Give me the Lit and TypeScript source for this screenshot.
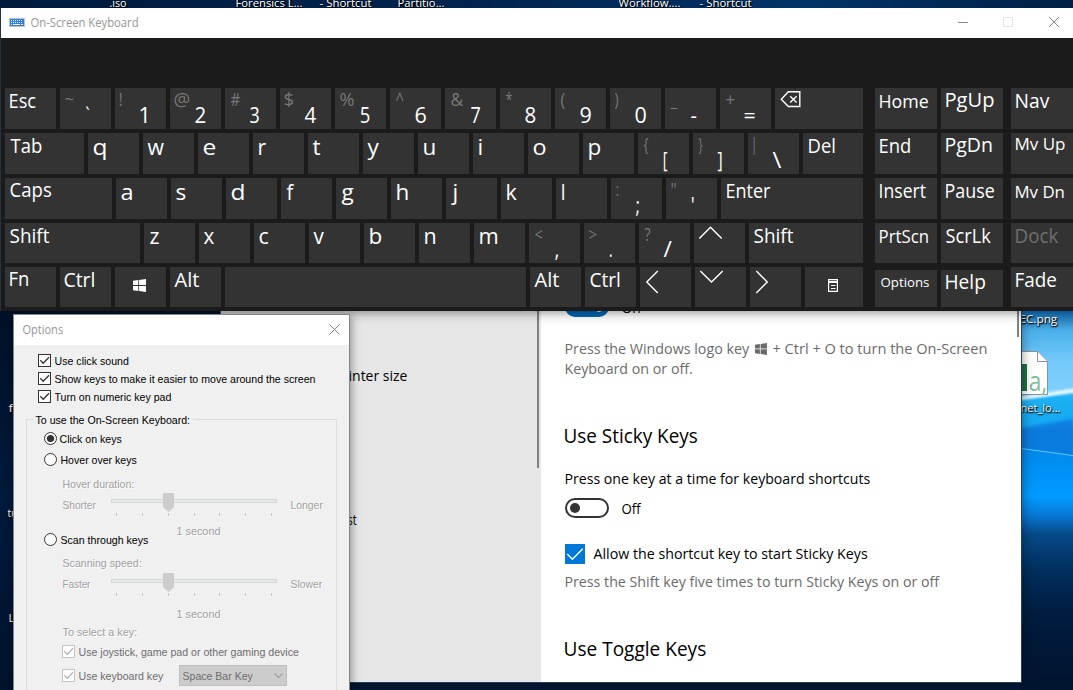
import { LitElement, html, css, svg, nothing } from "lit";
import { customElement, property } from "lit/decorators.js";
import { styleMap } from "lit/directives/style-map.js";

const UI = '"Open Sans", "Noto Sans", sans-serif';
const DIALOG = '"Liberation Sans", Arial, sans-serif';
const pen = document.createElement("canvas").getContext("2d")!;

/* One line of text, set so that its ink spans `w` pixels and its baseline is the host's bottom edge. */
@customElement("fit-label")
export class FitLabel extends LitElement {
  @property() text = "";
  @property({ type: Number }) w = 0;
  @property({ type: Number }) size = 12;
  @property() face = UI;

  static styles = css`
    :host { display: block; flex: none; }
    .line { display: block; overflow: visible; }
    .run { fill: currentColor; white-space: pre; }
  `;

  render() {
    pen.font = `${this.size}px ${this.face}`;
    const m = pen.measureText(this.text);
    const ink = m.actualBoundingBoxLeft + m.actualBoundingBoxRight;
    const scale = this.w && ink ? this.w / ink : 1;
    const h = Math.round(this.size);
    const dx = m.actualBoundingBoxLeft * scale - 0.5;
    return html`<svg class="line" width=${this.w} height=${h}>
      <text class="run" transform="translate(${dx} ${h}) scale(${scale} 1)"
        style=${styleMap({ fontFamily: this.face, fontSize: `${this.size}px` })}>${this.text}</text></svg>`;
  }
}

/* x: ink start, base: baseline, both from the parent's content box */
const label = (text: string, x: number, w: number, size: number, base: number, cls = "", face = UI) => html`
  <fit-label class=${cls} .text=${text} .w=${w} .size=${size} .face=${face}
    style=${styleMap({ marginLeft: `${x}px`, marginTop: `${base - Math.round(size)}px`, width: `${w}px`, height: `${Math.round(size)}px` })}></fit-label>`;

type Mark = [string, number, number, number, number, string?];
interface Key { w?: number; marks?: Mark[]; icon?: string; low?: boolean }

const word = (t: string, x: number, inkW: number, base: number, w = 51, size = 19.5, cls = ""): Key => ({ w, marks: [[t, x, inkW, size, base, cls]] });
const letter = (t: string, x: number, inkW: number, base = 22): Key => ({ marks: [[t, x, inkW, 22.5, base]] });
const dual = (up: string, ux: number, uw: number, lo: string, lx: number, lw: number, ub = 18, lb = 35): Key =>
  ({ marks: [[up, ux, uw, 17.5, ub, "shifted"], [lo, lx, lw, 21.5, lb]] });

const MAIN: Key[][] = [
  [word("Esc", 5, 26.3, 20), dual("~", 5, 9.5, "`", 26, 4), dual("!", 5, 2.5, "1", 25, 7), dual("@", 5, 15, "2", 25.5, 10.5),
   dual("#", 5.5, 9.5, "3", 25, 10), dual("$", 5, 8.5, "4", 25, 11.5), dual("%", 5, 14.5, "5", 25.5, 9.5), dual("^", 6, 8.5, "6", 25.5, 11),
   dual("&", 5.5, 13, "7", 26, 10), dual("*", 6, 6.5, "8", 26, 10.5), dual("(", 5.5, 4.5, "9", 25.5, 11), dual(")", 5, 4, "0", 25.5, 11),
   dual("_", 5, 8, "-", 25.5, 6.5), dual("+", 5.5, 9.5, "=", 25, 11), { w: 88, icon: "back" }],
  [word("Tab", 5.5, 31, 20, 79), letter("q", 5.5, 12), letter("w", 5, 17), letter("e", 5.5, 12), letter("r", 5.5, 7.5), letter("t", 5, 8),
   letter("y", 5, 12), letter("u", 5.5, 11), letter("i", 5.5, 3), letter("o", 5.5, 12.5), letter("p", 5.5, 12),
   dual("{", 5.5, 4.5, "[", 25.5, 4), dual("}", 5.5, 4.5, "]", 25, 4.5), dual("|", 5.5, 1.5, "\\", 25, 9), word("Del", 5.5, 26.5, 20, 60)],
  [word("Caps", 5.5, 41, 19, 107), letter("a", 5.5, 10.5), letter("s", 5.5, 9), letter("d", 5.5, 12), letter("f", 5.5, 8), letter("g", 5.5, 12),
   letter("h", 5.5, 11), letter("j", 4.5, 6), letter("k", 5.5, 10.5), letter("l", 5.5, 2.5), dual(":", 6, 2, ";", 25, 4),
   dual("\"", 5.5, 4.5, "'", 25.5, 2.5), word("Enter", 5.5, 44, 20, 142)],
  [word("Shift", 5.5, 39, 20, 135), letter("z", 5.5, 9.5, 21), letter("x", 5, 11, 21), letter("c", 5.5, 9.5, 21), letter("v", 5, 11, 21),
   letter("b", 5.5, 12, 21), letter("n", 5.5, 10.5, 21), letter("m", 5.5, 17.5, 21), dual("<", 5.5, 8.5, ",", 25.5, 3.5, 18, 34),
   dual(">", 5, 8.5, ".", 26, 2.5, 18, 34), dual("?", 6, 6.5, "/", 25, 8.5, 18, 34), { icon: "up" }, word("Shift", 5.5, 39, 20, 114)],
  [word("Fn", 5, 19, 19), word("Ctrl", 5, 30, 20), { icon: "win" }, word("Alt", 5, 25, 20), { w: 301 }, word("Alt", 5, 25, 20),
   word("Ctrl", 5.5, 29.5, 20), { icon: "left" }, { icon: "down" }, { icon: "right" }, { w: 58, icon: "menu" }],
];

const NAV: Key[][] = [
  [word("Home", 5, 49, 20, 62, 18.2), word("PgUp", 5, 48, 19, 62)],
  [word("End", 5, 31, 20, 62), word("PgDn", 5, 46.5, 19, 62)],
  [word("Insert", 5, 46.5, 20, 62), word("Pause", 5, 48.5, 20, 62)],
  [word("PrtScn", 5, 48.5, 20, 62, 18), word("ScrLk", 5.5, 45, 20, 62)],
  [{ ...word("Options", 5.5, 48.5, 17, 62, 13.5), low: true }, { ...word("Help", 5, 39.5, 19, 62), low: true }],
];

const SIDE: Key[][] = [
  [word("Nav", 5, 34, 20, 62)], [word("Mv Up", 5, 49, 17, 62, 16.2)], [word("Mv Dn", 5, 48.5, 20, 62, 16.2)],
  [word("Dock", 5, 43.5, 20, 62, 19.5, "disabled")], [word("Fade", 5, 40.5, 20, 62)],
];

const winLogo = svg`<path d="M0 1.8L5.3 1.1V6H0zM6.1 1L13 0V6H6.1zM0 6.9H5.3V11.9L0 11.2zM6.1 6.9H13V13L6.1 12z" fill="currentColor"/>`;

/* Icon geometry is in the key's own pixel box. */
const ICONS: Record<string, unknown> = {
  back: svg`<path d="M6.3 11.2L13.3 3.8H24.8V18.5H13.3Z" stroke-width="1.4"/><path d="M15.2 8.2L21.6 14.5M21.6 8.2L15.2 14.5" stroke-width="1.4"/>`,
  up: svg`<path d="M5.3 15.5L16.5 4.3L27.7 15.5"/>`,
  left: svg`<path d="M17.8 4L6.8 15L17.8 26"/>`,
  down: svg`<path d="M5.3 4L16.5 15L27.7 4"/>`,
  right: svg`<path d="M6.3 4L17.3 15L6.3 26"/>`,
  win: svg`<g transform="translate(18 12)" stroke="none">${winLogo}</g>`,
  menu: svg`<path d="M23.6 12.6H32.4V24.4H23.6Z" stroke-width="1.2"/><path d="M23 14.5H33M26 18.5H30.5M26 21.5H30.5" stroke-width="1.2"/><path d="M23 15.5H33" stroke-width="1"/>`,
};

@customElement("osk-window")
export class OskWindow extends LitElement {
  static styles = css`
    :host { display: flex; flex-direction: column; box-sizing: border-box; background: #1b1b1b; border-left: 1px solid #26313f; color: #fff; overflow: hidden; }
    .bar { display: flex; height: 30px; flex: none; background: #fff; color: #969696; align-items: flex-start; }
    .app { margin: 10px 0 0 8px; flex: none; }
    .controls { margin-left: auto; flex: none; }
    .deck { display: flex; padding: 50px 0 0 4px; }
    .rows { display: flex; flex-direction: column; gap: 4px; flex: none; }
    .nav { margin-left: 12px; }
    .side { margin-left: 8px; }
    .row { display: flex; gap: 4px; height: 41px; align-items: stretch; }
    .row.short { height: 40px; }
    .key { display: grid; align-content: start; background: #333; flex: none; }
    .key > * { grid-area: 1 / 1; }
    .key.low { margin-top: 3px; height: 37px; }
    .shifted { color: #777; }
    .disabled { color: #6e6e6e; }
  `;

  private key(k: Key) {
    return html`<div class="key ${k.low ? "low" : ""}" style=${styleMap({ width: `${k.w ?? 51}px` })}>
      ${(k.marks ?? []).map(([t, x, w, s, b, c]) => label(t, x, w, s, b, c ?? ""))}
      ${k.icon ? html`<svg width=${k.w ?? 51} height="40" fill="none" stroke="#fff" stroke-width="1.4">${ICONS[k.icon]}</svg>` : nothing}
    </div>`;
  }

  private rows(rows: Key[][], cls = "") {
    return html`<div class="rows ${cls}">${rows.map((r, i) => html`<div class="row ${i > 2 ? "short" : ""}">${r.map((k) => this.key(k))}</div>`)}</div>`;
  }

  render() {
    return html`
      <div class="bar">
        <svg class="app" width="16" height="9" viewBox="0 0 16 9" shape-rendering="crispEdges">
          <rect width="16" height="9" fill="#b9c4ce"/><rect x="1" y="1" width="14" height="7" fill="#2a7fd6"/>
          <path d="M2 2.5H14M2 4.5H14" stroke="#fff" stroke-dasharray="1 1"/><path d="M2 6.5H3M4 6.5H11M12 6.5H14" stroke="#fff"/>
        </svg>
        ${label("On-Screen Keyboard", 5.5, 108, 11.8, 19)}
        <svg class="controls" width="120" height="30" fill="none">
          <path d="M5 14.5H15" stroke="#888"/><rect x="50.5" y="9.5" width="9" height="9" stroke="#e4e4e4"/>
          <path d="M96 9L106 19M106 9L96 19" stroke="#858585"/>
        </svg>
      </div>
      <div class="deck">${this.rows(MAIN)}${this.rows(NAV, "nav")}${this.rows(SIDE, "side")}</div>`;
  }
}

@customElement("osk-options")
export class OskOptions extends LitElement {
  static styles = css`
    :host { display: flex; flex-direction: column; box-sizing: border-box; background: #f0f0f0; border: 1px solid #83868a; border-bottom: 0; color: #000; overflow: hidden; }
    .bar { display: flex; height: 30px; flex: none; background: #fff; color: #969696; }
    .close { margin-left: auto; margin-right: 5px; }
    .checks { padding: 6px 0 0 24px; }
    .row { display: flex; align-items: flex-start; flex: none; }
    .box { margin-top: 3px; flex: none; }
    .group { margin: 14px 0 0 12px; width: 309px; height: 300px; border: 1px solid #dcdcdc; }
    .legend { display: flex; width: 160px; height: 9px; margin-left: 6px; margin-top: -1px; padding-bottom: 1px; background: #f0f0f0; }
    .radio { padding-left: 17px; }
    .sub { padding-left: 35px; }
    .off { color: #a0a0a0; text-shadow: 1px 1px 0 #fff; }
    .dim { color: #6d6d6d; }
    .slide { flex: none; }
    .combo { display: flex; box-sizing: border-box; width: 108px; height: 21px; margin-left: 15px; margin-top: -1px; background: #ccc; border: 1px solid #bfbfbf; color: #6d6d6d; flex: none; }
  `;

  private check(dim = false) {
    return html`<svg class="box" width="13" height="13" fill="none">
      <rect x=".5" y=".5" width="12" height="12" fill="#fff" stroke=${dim ? "#c3c3c3" : "#333"}/>
      <path d="M2.3 6.3L5.2 9.3L11 3.2" stroke=${dim ? "#b5b5b5" : "#333"} stroke-width="1.3"/></svg>`;
  }
  private radio(on: boolean) {
    return html`<svg class="box" width="13" height="13"><circle cx="6.5" cy="6.5" r="6" fill="#fff" stroke="#333"/>${on ? svg`<circle cx="6.5" cy="6.5" r="3.6" fill="#333"/>` : nothing}</svg>`;
  }
  private t(text: string, x: number, w: number, base: number, cls = "") {
    return label(text, x, w, 11.6, base, cls, DIALOG);
  }
  private slider(a: string, aw: number, b: string, bw: number, base: number, gap: number) {
    const ticks = [5.5, 31.5, 57.5, 83.5, 108.5, 134.5, 160.5];
    return html`<div class="row sub" style=${styleMap({ height: "28px" })}>
      ${this.t(a, 1, aw, base, "off")}
      <svg class="slide" width="166" height="25" style=${styleMap({ marginLeft: `${gap}px` })}>
        <rect x=".5" y="6.5" width="165" height="3" fill="#e7eaea" stroke="#d6d6d6"/>
        <path d="M52 0H63V14L57.5 19L52 14Z" fill="#ccc"/>
        ${ticks.map((x) => svg`<path d="M${x} 20V23" stroke="#c4c4c4"/>`)}
      </svg>
      ${this.t(b, 13.5, bw, base, "off")}
    </div>`;
  }
  private row(h: number, cls: string, body: unknown) {
    return html`<div class="row ${cls}" style=${styleMap({ height: `${h}px` })}>${body}</div>`;
  }

  render() {
    return html`
      <div class="bar">
        ${label("Options", 8.5, 41, 11.8, 19)}
        <svg class="close" width="16" height="30" fill="none"><path d="M1.5 9.5L11.5 19.5M11.5 9.5L1.5 19.5" stroke="#858585"/></svg>
      </div>
      <div class="checks">
        ${this.row(18, "", [this.check(), this.t("Use click sound", 4, 74, 14)])}
        ${this.row(18, "", [this.check(), this.t("Show keys to make it easier to move around the screen", 3.7, 260.5, 14)])}
        ${this.row(18, "", [this.check(), this.t("Turn on numeric key pad", 3.5, 116.5, 14)])}
      </div>
      <div class="group">
        <div class="legend">${this.t("To use the On-Screen Keyboard:", 2.7, 154.5, 5)}</div>
        ${this.row(21, "radio", [this.radio(true), this.t("Click on keys", 3, 62.5, 14)])}
        ${this.row(24, "radio", [this.radio(false), this.t("Hover over keys", 3.7, 76.5, 14)])}
        ${this.row(19, "sub", this.t("Hover duration:", 1, 71.5, 14, "off"))}
        ${this.slider("Shorter", 33.5, "Longer", 32.5, 16, 14.5)}
        ${this.row(9, "sub", this.t("1 second", 115, 43.5, 14, "off"))}
        ${this.row(23, "radio", [this.radio(false), this.t("Scan through keys", 3.5, 88, 14)])}
        ${this.row(20, "sub", this.t("Scanning speed:", 1, 79, 14, "off"))}
        ${this.slider("Faster", 28, "Slower", 32, 15, 20)}
        ${this.row(18, "sub", this.t("1 second", 115, 43.5, 17, "off"))}
        ${this.row(23, "sub", this.t("To select a key:", 1, 74.5, 17, "off"))}
        ${this.row(24, "sub", [this.check(true), this.t("Use joystick, game pad or other gaming device", 3.7, 220, 14, "dim")])}
        ${this.row(24, "sub", [this.check(true), this.t("Use keyboard key", 3.7, 85, 14, "dim"), html`<div class="combo">
          ${this.t("Space Bar Key", 3.5, 70.5, 14)}
          <svg width="30" height="19" fill="none"><path d="M20.5 7.5L24.5 11.5L28.5 7.5" stroke="#a0a0a0" stroke-width="1.2"/></svg></div>`])}
      </div>`;
  }
}

@customElement("settings-window")
export class SettingsWindow extends LitElement {
  static styles = css`
    :host { display: flex; background: #fff; color: #000; overflow: hidden; }
    .menu { display: flex; width: 320px; background: #e6e6e6; flex: none; justify-content: space-between; }
    .bar { width: 2px; background: #7f7f7f; }
    .menu .bar { height: 168px; margin-right: 2px; }
    .page { display: flex; flex: 1; justify-content: space-between; }
    .page .bar { height: 37px; margin-right: 2px; }
    .row { display: flex; align-items: flex-start; padding-left: 24px; }
    .menu .row { padding-left: 127px; }
    .quiet { color: #6b6b6b; }
    .ic { flex: none; }
  `;
  private row(h: number, body: unknown) {
    return html`<div class="row" style=${styleMap({ height: `${h}px` })}>${body}</div>`;
  }
  render() {
    return html`
      <div class="menu">
        <div>
          ${this.row(140, label("inter size", 1.5, 58, 14.2, 81))}
          ${this.row(160, label("st", 0, 9, 14.2, 85))}
        </div>
        <div class="bar"></div>
      </div>
      <div class="page">
        <div>
          ${this.row(31, [html`<svg class="ic" width="44" height="20"><rect y="-3" width="44" height="20" rx="10" fill="#0067b8"/><circle cx="34" cy="7" r="5" fill="#fff"/></svg>`, label("On", 13.3, 18.5, 14.2, 13)])}
          ${this.row(32, html`
            ${label("Press the Windows logo key", 1.2, 184.5, 14.2, 23, "quiet")}
            <svg class="ic quiet" width="13" height="24" viewBox="0 -12 13 24" style=${styleMap({ marginLeft: "4.3px" })}><g transform="scale(.92)">${winLogo}</g></svg>
            ${label("+ Ctrl + O to turn the On-Screen", 5, 214.3, 14.2, 23, "quiet")}`)}
          ${this.row(61, label("Keyboard on or off.", 1.2, 126.5, 14.2, 11, "quiet"))}
          ${this.row(44, label("Use Sticky Keys", -0.5, 133, 19.3, 19))}
          ${this.row(30, label("Press one key at a time for keyboard shortcuts", 1.2, 305, 14.2, 16))}
          ${this.row(46, [html`<svg class="ic" width="44" height="20"><rect x="1" y="1" width="42" height="18" rx="9" fill="#fff" stroke="#333" stroke-width="2"/><circle cx="10" cy="10" r="5" fill="#333"/></svg>`, label("Off", 12.5, 20.5, 14.2, 16)])}
          ${this.row(30, [html`<svg class="ic" width="20" height="20" fill="none"><rect width="20" height="20" fill="#0078d7"/><path d="M2.2 10L7.4 15.2L17.8 4.8" stroke="#fff" stroke-width="1.4"/></svg>`, label("Allow the shortcut key to start Sticky Keys", 8.8, 274.5, 14.2, 15)])}
          ${this.row(40, label("Press the Shift key five times to turn Sticky Keys on or off", 1.2, 375, 14.2, 13, "quiet"))}
          ${this.row(40, label("Use Toggle Keys", -0.5, 141.5, 19.3, 42))}
        </div>
        <div class="bar"></div>
      </div>`;
  }
}

/* text, ink x, ink width, baseline */
const DESKTOP: [string, number, number, number][] = [
  [".iso", 110, 17, 7], ["Forensics L...", 237, 66, 7], ["- Shortcut", 320, 52, 7], ["Partitio...", 399, 46, 7],
  ["Workflow....", 618.5, 62, 7], ["- Shortcut", 700, 52, 7], ["fi", 9, 7, 412], ["tu", 8, 10, 517], ["L", 10, 5, 622],
  ["EC.png", 1021, 37.5, 323], ["net_lo...", 1021, 40, 412],
];

@customElement("app-root")
export class AppRoot extends LitElement {
  static styles = css`
    :host { display: block; position: relative; width: 1073px; height: 690px; overflow: hidden; background: #001a38; }
    .wall, .item, settings-window, osk-window, osk-options, .cast { position: absolute; }
    .wall { inset: 0; }
    .item { color: #fff; text-shadow: 1px 1px 1px #000, 0 1px 2px #000; }
    settings-window { left: 221px; top: 300px; width: 800px; height: 382px; box-shadow: 0 0 0 1px #24405c, 0 2px 12px rgba(0, 0, 0, .5); }
    .cast { left: 221px; top: 311px; width: 800px; height: 13px; background: linear-gradient(rgba(0, 0, 0, .28), rgba(0, 0, 0, .07) 50%, transparent); }
    osk-window { left: 0; top: 8px; width: 1073px; height: 303px; }
    osk-options { left: 13px; top: 314px; width: 337px; height: 376px; box-shadow: 1px 2px 9px rgba(0, 0, 0, .42); }
  `;
  render() {
    return html`
      <svg class="wall" width="1073" height="690">
        <defs>
          <linearGradient id="top"><stop offset="0" stop-color="#001b3c"/><stop offset=".45" stop-color="#00244f"/><stop offset=".75" stop-color="#003468"/><stop offset="1" stop-color="#002045"/></linearGradient>
          <linearGradient id="left" x2="0" y2="1"><stop offset="0" stop-color="#001127"/><stop offset=".5" stop-color="#001a3b"/><stop offset="1" stop-color="#00132d"/></linearGradient>
          <linearGradient id="sky" x2="0" y2="1"><stop offset="0" stop-color="#0c5896"/><stop offset=".05" stop-color="#49aee8"/><stop offset=".13" stop-color="#72c9fa"/><stop offset=".21" stop-color="#7ed0fb"/><stop offset=".23" stop-color="#25aef5"/><stop offset=".29" stop-color="#16a1f2"/><stop offset=".32" stop-color="#0a82e0"/><stop offset=".41" stop-color="#0090f4"/><stop offset=".49" stop-color="#009cff"/><stop offset=".54" stop-color="#0878d5"/><stop offset=".59" stop-color="#064a88"/><stop offset=".68" stop-color="#00305f"/><stop offset=".8" stop-color="#001c3f"/><stop offset="1" stop-color="#00142e"/></linearGradient>
          <filter id="soft" x="-20%" y="-100%" width="140%" height="300%"><feGaussianBlur stdDeviation="1.2"/></filter>
        </defs>
        <rect width="1073" height="9" fill="url(#top)"/>
        <rect y="309" width="222" height="381" fill="url(#left)"/>
        <rect x="1021" y="311" width="52" height="379" fill="url(#sky)"/>
        <path d="M1021 403L1073 393V415L1021 428Z" fill="#12b2f4" opacity=".6" filter="url(#soft)"/>
        <path d="M1015 399L1078 390" stroke="#e4f8ff" stroke-width="4" filter="url(#soft)"/>
        <path d="M1021 430L1073 419V455L1021 448Z" fill="#0877dc" opacity=".7" filter="url(#soft)"/>
        <path d="M1021 448.500L1073 455.500" stroke="#5ac8fa" stroke-width="1.2"/>
        <path d="M1021 351.500H1037.500L1047.500 361.500V394.500H1021Z" fill="#fff" stroke="#8a9299"/>
        <path d="M1037.500 351.500V361.500H1047.500" fill="#fff" stroke="#8a9299"/>
        <rect x="1021" y="364" width="6" height="27" fill="#217346"/>
      </svg>
      <div class="item" style=${styleMap({ left: "1021px", top: "364px", color: "#7fbf9b", textShadow: "none" })}>${label("a,", 9, 16, 27, 27)}</div>
      ${DESKTOP.map(([t, x, w, b]) => html`<div class="item" style=${styleMap({ left: `${x}px`, top: `${b - 12}px` })}>${label(t, 0, w, 11.6, 12)}</div>`)}
      <settings-window></settings-window>
      <div class="cast"></div>
      <osk-options></osk-options>
      <osk-window></osk-window>`;
  }
}
